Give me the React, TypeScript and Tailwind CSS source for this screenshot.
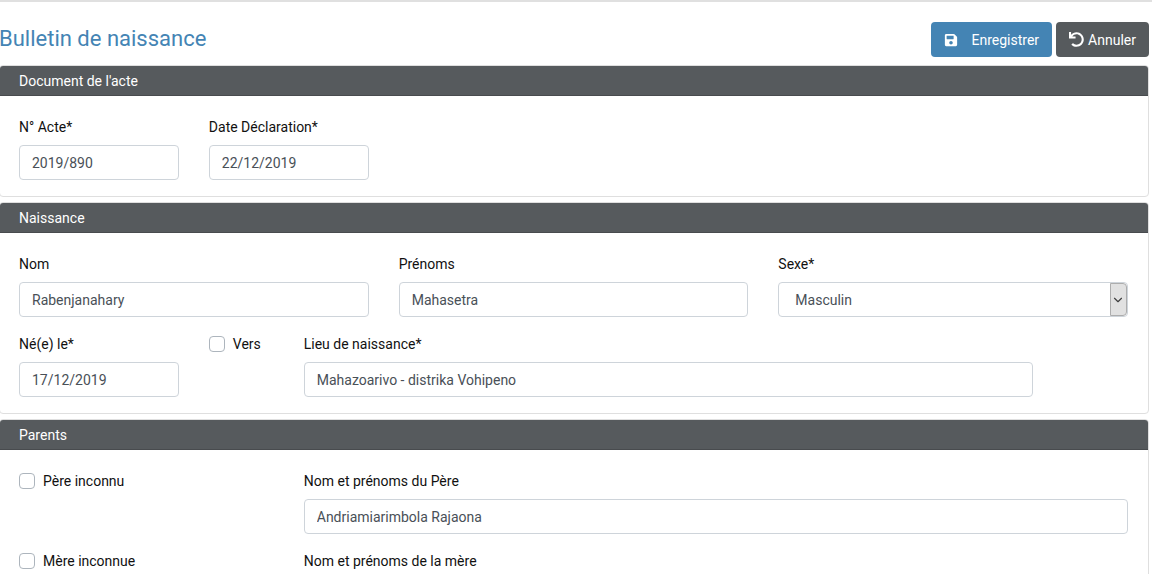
import { useId, type ReactNode } from 'react';
import { FaSave, FaUndo } from 'react-icons/fa';
import { LuChevronDown } from 'react-icons/lu';

const control =
  'block h-[35px] w-full rounded border border-[#ced4da] bg-white px-3 text-sm text-[#495057] outline-none focus:border-[#4484b4]';

function Card({ title, children }: { title: string; children: ReactNode }) {
  return (
    <section className="-ml-px overflow-hidden rounded border border-[#dfdfdf] bg-white">
      <h2 className="border-b border-[#484b4e] bg-[#565a5d] px-[19px] pt-px text-sm leading-7 text-white">
        {title}
      </h2>
      <div className="grid grid-cols-12 gap-x-[30px] gap-y-4 pt-5 pr-5 pb-4 pl-[19px]">{children}</div>
    </section>
  );
}

function Field({ label, value, span }: { label: string; value: string; span: string }) {
  const id = useId();
  return (
    <div className={span}>
      <label htmlFor={id} className="mb-[7px] block text-sm leading-[22px]">
        {label}
      </label>
      <input id={id} type="text" defaultValue={value} className={control} />
    </div>
  );
}

function SelectField({ label, options, span }: { label: string; options: string[]; span: string }) {
  const id = useId();
  return (
    <div className={span}>
      <label htmlFor={id} className="mb-[7px] block text-sm leading-[22px]">
        {label}
      </label>
      <div className="relative">
        <select id={id} className={`${control} appearance-none pl-4`}>
          {options.map((option) => (
            <option key={option}>{option}</option>
          ))}
        </select>
        <span className="pointer-events-none absolute inset-y-px right-px flex w-[17px] items-center justify-center rounded-r-sm border border-[#adadad] bg-[#e1e1e1] text-[#404040]">
          <LuChevronDown size={14} className="shrink-0" />
        </span>
      </div>
    </div>
  );
}

function Check({ label, span }: { label: string; span: string }) {
  return (
    <div className={span}>
      <label className="flex items-center gap-2 text-sm leading-[22px] whitespace-nowrap">
        <input
          type="checkbox"
          className="size-4 shrink-0 appearance-none rounded border border-[#adb5bd] bg-white checked:border-[#4484b4] checked:bg-[#4484b4]"
        />
        {label}
      </label>
    </div>
  );
}

export default function App() {
  return (
    <div className="h-screen overflow-hidden border-t-2 border-[#e0e0e0] bg-white pr-[3px] font-[Roboto,sans-serif] text-[#111111]">
      <form onSubmit={(e) => e.preventDefault()}>
        <header className="flex items-start justify-between pt-5 pb-2">
          <h1 className="-ml-px text-[22px] leading-[34px] text-[#4484b4]">Bulletin de naissance</h1>
          <div className="flex gap-1">
            <button
              type="submit"
              className="flex h-[35px] items-center gap-3.5 rounded bg-[#4484b4] px-[13px] text-sm text-white"
            >
              <FaSave size={14} />
              Enregistrer
            </button>
            <button
              type="button"
              className="flex h-[35px] items-center gap-1 rounded bg-[#565a5d] px-[13px] text-sm text-white"
            >
              <FaUndo size={15} />
              Annuler
            </button>
          </div>
        </header>
        <div className="flex flex-col gap-[5px]">
          <Card title="Document de l'acte">
            <Field label="N° Acte*" value="2019/890" span="col-span-2" />
            <Field label="Date Déclaration*" value="22/12/2019" span="col-span-2" />
          </Card>
          <Card title="Naissance">
            <Field label="Nom" value="Rabenjanahary" span="col-span-4" />
            <Field label="Prénoms" value="Mahasetra" span="col-span-4" />
            <SelectField label="Sexe*" options={['Masculin', 'Féminin']} span="col-span-4" />
            <Field label="Né(e) le*" value="17/12/2019" span="col-span-2" />
            <Check label="Vers" span="col-span-1" />
            <Field label="Lieu de naissance*" value="Mahazoarivo - distrika Vohipeno" span="col-span-8" />
          </Card>
          <Card title="Parents">
            <Check label="Père inconnu" span="col-span-3" />
            <Field label="Nom et prénoms du Père" value="Andriamiarimbola Rajaona" span="col-span-9" />
            <Check label="Mère inconnue" span="col-span-3" />
            <Field label="Nom et prénoms de la mère" value="" span="col-span-9" />
          </Card>
        </div>
      </form>
    </div>
  );
}
